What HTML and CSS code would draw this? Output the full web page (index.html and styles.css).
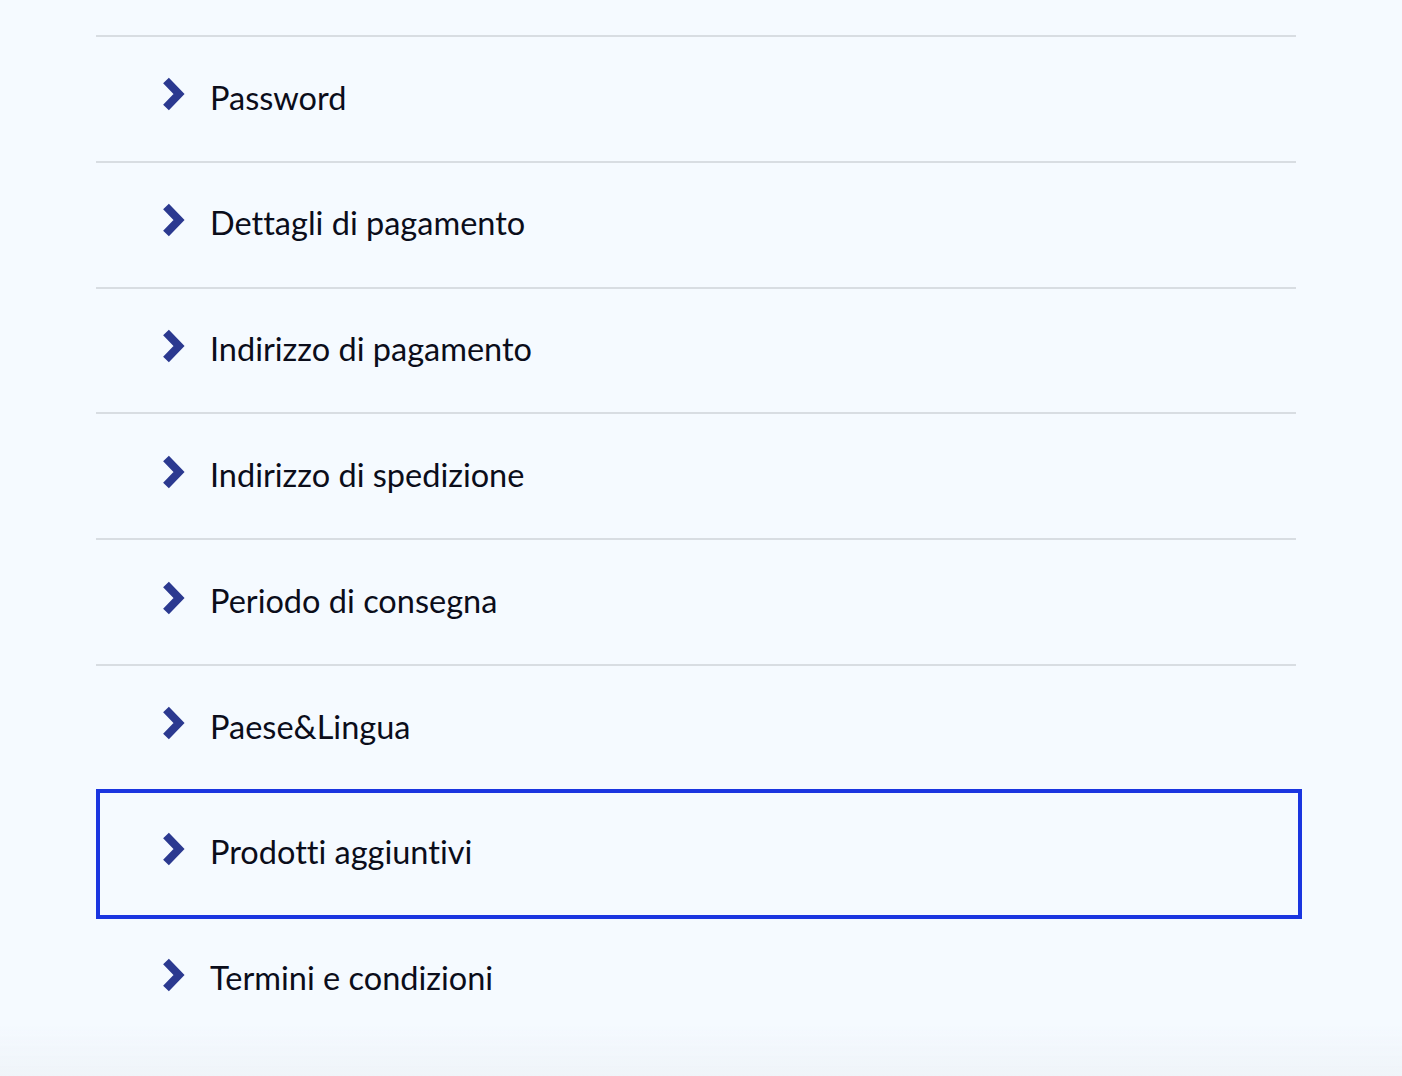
FILE: index.html
```html
<!DOCTYPE html>
<html lang="it">
<head>
<meta charset="utf-8">
<title>Impostazioni</title>
<link rel="stylesheet" href="styles.css">
</head>
<body>
<main class="page">
  <ul class="menu">
    <li class="row"><span class="chev"><svg viewBox="0 0 26 34" width="26" height="34"><path d="M4 3.5 L17 17 L4 30.5" fill="none" stroke="#2b3990" stroke-width="8"/></svg></span><span class="label">Password</span></li>
    <li class="row"><span class="chev"><svg viewBox="0 0 26 34" width="26" height="34"><path d="M4 3.5 L17 17 L4 30.5" fill="none" stroke="#2b3990" stroke-width="8"/></svg></span><span class="label">Dettagli di pagamento</span></li>
    <li class="row"><span class="chev"><svg viewBox="0 0 26 34" width="26" height="34"><path d="M4 3.5 L17 17 L4 30.5" fill="none" stroke="#2b3990" stroke-width="8"/></svg></span><span class="label">Indirizzo di pagamento</span></li>
    <li class="row"><span class="chev"><svg viewBox="0 0 26 34" width="26" height="34"><path d="M4 3.5 L17 17 L4 30.5" fill="none" stroke="#2b3990" stroke-width="8"/></svg></span><span class="label">Indirizzo di spedizione</span></li>
    <li class="row"><span class="chev"><svg viewBox="0 0 26 34" width="26" height="34"><path d="M4 3.5 L17 17 L4 30.5" fill="none" stroke="#2b3990" stroke-width="8"/></svg></span><span class="label">Periodo di consegna</span></li>
    <li class="row"><span class="chev"><svg viewBox="0 0 26 34" width="26" height="34"><path d="M4 3.5 L17 17 L4 30.5" fill="none" stroke="#2b3990" stroke-width="8"/></svg></span><span class="label">Paese&amp;Lingua</span></li>
    <li class="row focused"><span class="chev"><svg viewBox="0 0 26 34" width="26" height="34"><path d="M4 3.5 L17 17 L4 30.5" fill="none" stroke="#2b3990" stroke-width="8"/></svg></span><span class="label">Prodotti aggiuntivi</span></li>
    <li class="row last"><span class="chev"><svg viewBox="0 0 26 34" width="26" height="34"><path d="M4 3.5 L17 17 L4 30.5" fill="none" stroke="#2b3990" stroke-width="8"/></svg></span><span class="label">Termini e condizioni</span></li>
  </ul>
</main>
</body>
</html>
```

FILE: styles.css
```css
html, body {
  margin: 0;
  padding: 0;
}
body {
  background: #f5faff;
  min-height: 1076px;
  font-family: Lato, "Noto Sans", sans-serif;
  color: #0b0d1a;
  position: relative;
}
body::after {
  content: "";
  position: fixed;
  left: 0;
  right: 0;
  bottom: 0;
  height: 50px;
  background: linear-gradient(to bottom, rgba(239,244,249,0), #eff4f9);
  pointer-events: none;
}
.page {
  padding: 35px 106px 0 96px;
}
.menu {
  list-style: none;
  margin: 0;
  padding: 0;
  width: 1200px;
}
.row {
  position: relative;
  display: flex;
  align-items: center;
  height: 123.8px;
  border-top: 2px solid #d8dde2;
  padding-left: 64px;
}
.chev {
  display: flex;
  width: 26px;
  height: 34px;
  margin-left: 1.5px;
  margin-top: -9px;
}
.label {
  margin-left: 22.5px;
  font-size: 32.5px;
  line-height: 1;
  margin-top: -2px;
  font-variant-ligatures: none;
}
.focused::after {
  content: "";
  position: absolute;
  z-index: 1;
  left: 0;
  right: -6px;
  top: -3px;
  bottom: -3px;
  border: 4px solid #1a35e0;
  pointer-events: none;
}
```
